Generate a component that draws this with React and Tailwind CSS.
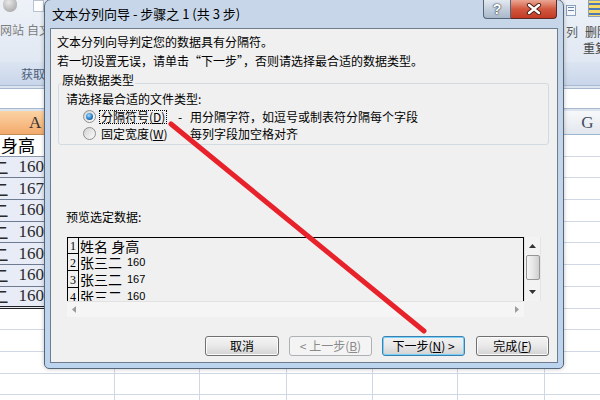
import React from "react";

const cjk = "font-['Noto_Sans_CJK_SC',sans-serif]";
const cols = "grid grid-cols-[115px_85px_87px_86px_85px_87px_86px]";
const dataRows = ["160", "167", "160", "160", "160", "160", "160"];
const previewRows = [
  { n: "1", name: "姓名 身高" },
  { n: "2", name: "张三二", v: "160" },
  { n: "3", name: "张三二", v: "167" },
  { n: "4", name: "张三二", v: "160" },
];

function Radio({ checked }) {
  return (
    <span className="flex h-[13px] w-[13px] shrink-0 items-center justify-center rounded-full border border-[#8e8f8f] bg-linear-to-br from-[#d4d4d4] to-[#fbfbfb]">
      {checked && (
        <span className="h-[7px] w-[7px] rounded-full bg-[radial-gradient(circle_at_40%_35%,#9fe0ff,#2a7cc6_55%,#0d3f7a)]" />
      )}
    </span>
  );
}

function Btn({ children, className }) {
  return (
    <div
      className={`flex h-[20px] items-center justify-center rounded-[3px] border text-[12px] leading-[14px] ${className}`}
    >
      {children}
    </div>
  );
}

function Tri({ dir, color = "#333" }) {
  const pts = {
    up: "0,4 3.5,0 7,4",
    down: "0,0 7,0 3.5,4",
    left: "4,0 4,7 0,3.5",
    right: "0,0 0,7 4,3.5",
  }[dir];
  const vert = dir === "up" || dir === "down";
  return (
    <svg width={vert ? 7 : 4} height={vert ? 4 : 7}>
      <polygon points={pts} fill={color} />
    </svg>
  );
}

function Sheet() {
  const rows = Array.from({ length: 13 }, (_, i) => i);
  return (
    <div className="flex flex-col">
      {/* ribbon */}
      <div className={`flex h-[62px] justify-between bg-linear-to-b from-[#eef2f8] to-[#e0e8f3] text-[12px] leading-[14px] ${cjk}`}>
        <div className="flex w-[44px] shrink-0 overflow-hidden whitespace-nowrap text-[#7d7d7d]">
          <div className="flex w-[27px] shrink-0 flex-col">
            <div className="ml-[3px] -mt-[3px] h-[15px] w-[14px] rounded-full bg-[radial-gradient(circle_at_40%_35%,#e8e8e8,#9a9a9a)]" />
            <span className="mt-[11px]">网站</span>
          </div>
          <div className="flex flex-col">
            <div className="ml-[6px] h-[12px] w-[11px] border border-[#b9c3cf] bg-white" />
            <span className="mt-[11px]">自文本</span>
          </div>
        </div>
        <div className="flex w-[37px] shrink-0 overflow-hidden whitespace-nowrap text-[#444]">
          <div className="flex w-[22px] shrink-0 flex-col items-start">
            <div className="mt-[5px] ml-[3px] flex h-[11px] w-[10px] flex-col gap-[2px] border border-[#8aa0bb] bg-[#f4f8fd] p-[1px]">
              <div className="h-[1px] bg-[#6d86a8]" />
              <div className="h-[1px] bg-[#6d86a8]" />
            </div>
            <span className="mt-[9px] ml-[3px] text-[#5a5a5a]">列</span>
          </div>
          <div className="flex flex-col">
            <div className="ml-[3px] flex h-[17px] w-[14px] flex-col justify-around border border-[#8aa0bb] bg-[#f6d867]">
              <div className="h-[2px] bg-[#4d79b7]" />
              <div className="h-[2px] bg-[#4d79b7]" />
              <div className="h-[2px] bg-[#4d79b7]" />
            </div>
            <span className="mt-[8px]">删除</span>
            <span className="-ml-[2px] mt-[2px]">重复项</span>
          </div>
        </div>
      </div>
      <div className="flex h-[24px] items-center justify-between border-b border-[#a9bad3] bg-linear-to-b from-[#dbe4f1] to-[#c9d6ea]">
        <span className={`pl-[21px] text-[12px] text-[#4b5e7b] ${cjk}`}>获取</span>
      </div>
      <div className="h-[2px] bg-[#dde5f1]" />
      <div className="h-[21px] border-y border-[#a8b8cf] bg-white" />
      <div className="h-[2px] bg-[#dbe3ee]" />
      {/* column headers */}
      <div className={`${cols} h-[24px] font-['Liberation_Serif',serif] text-[17px] leading-[23px] text-[#333]`}>
        <div className="border-r border-b border-[#c58d55] bg-linear-to-b from-[#fbd3a4] to-[#f3aa6c] pl-[29px]">A</div>
        <div className="border-r border-b border-[#9eb6ce] bg-linear-to-b from-[#f7f8fa] to-[#e2e7ee]" />
        <div className="border-r border-b border-[#9eb6ce] bg-linear-to-b from-[#f7f8fa] to-[#e2e7ee]" />
        <div className="border-r border-b border-[#9eb6ce] bg-linear-to-b from-[#f7f8fa] to-[#e2e7ee]" />
        <div className="border-r border-b border-[#9eb6ce] bg-linear-to-b from-[#f7f8fa] to-[#e2e7ee]" />
        <div className="border-r border-b border-[#9eb6ce] bg-linear-to-b from-[#f7f8fa] to-[#e2e7ee]" />
        <div className="border-r border-b border-[#9eb6ce] bg-linear-to-b from-[#f7f8fa] to-[#e2e7ee] text-center text-[#3d4b5e]">G</div>
      </div>
      {rows.map((i) => {
        const isData = i >= 1 && i <= 7;
        let aCls = "border-r border-b border-[#d0d7e5] bg-white";
        if (i === 0) aCls = "border-b border-[#8c98ac] bg-white";
        if (isData) aCls = "border-b border-[#6f7b90] bg-[#e8ecf7]";
        if (i === 7) aCls = "border-b-[3px] border-double border-[#222] bg-[#e8ecf7]";
        return (
          <div key={i} className={`${cols} h-[21.7px]`}>
            <div className={`flex items-center overflow-hidden ${aCls}`}>
              {i === 0 && (
                <div className={`flex w-[35px] justify-end overflow-hidden whitespace-nowrap text-[17px] leading-[20px] text-black ${cjk}`}>
                  姓名 身高
                </div>
              )}
              {isData && (
                <div className="flex w-[44px] items-center justify-end overflow-hidden whitespace-nowrap leading-[20px] text-[#2a2a2a]">
                  <span className={`text-[17px] ${cjk}`}>张三二</span>
                  <span className="ml-[10px] font-['Liberation_Serif',serif] text-[17px]">{dataRows[i - 1]}</span>
                </div>
              )}
            </div>
            <div className="border-r border-b border-[#d0d7e5] bg-white" />
            <div className="border-r border-b border-[#d0d7e5] bg-white" />
            <div className="border-r border-b border-[#d0d7e5] bg-white" />
            <div className="border-r border-b border-[#d0d7e5] bg-white" />
            <div className="border-r border-b border-[#d0d7e5] bg-white" />
            <div className="border-r border-b border-[#d0d7e5] bg-white" />
          </div>
        );
      })}
    </div>
  );
}

function Dialog() {
  return (
    <div className="absolute left-[44px] top-[-1px] flex h-[370px] w-[520px] flex-col rounded-t-[7px] rounded-b-[5px] border border-[#56667a] bg-linear-to-b from-[#c7d6e9] via-[#c3d5ea] to-[#bcd4ee] shadow-[0_0_4px_rgba(0,0,0,0.25)]">
      {/* title bar */}
      <div className="flex h-[28px] shrink-0 items-start justify-between pl-[7px] pr-[6px]">
        <div className={`pt-[5px] text-[13px] leading-[17px] text-black ${cjk}`}>
          文本分列向导 - 步骤之 1 (共 3 步)
        </div>
        <div className="flex h-[19px]">
          <div className="flex w-[28px] items-center justify-center rounded-bl-[4px] border border-t-0 border-[#56667a] bg-linear-to-b from-[#e3e9f1] via-[#c4cfdc] to-[#a9b8ca] font-['Liberation_Sans',sans-serif] text-[14px] font-bold text-white [text-shadow:0_0_2px_#1d2a3a,0_0_1px_#1d2a3a]">
            ?
          </div>
          <div className="flex w-[46px] items-center justify-center rounded-br-[4px] border border-t-0 border-l-0 border-[#5a2a22] bg-linear-to-b from-[#eaa693] via-[#d2583f] to-[#c23a23]">
            <svg width="16" height="12">
              <path d="M3 2 L13 10 M13 2 L3 10" stroke="#4a1e16" strokeWidth="4.2" strokeLinecap="round" />
              <path d="M3 2 L13 10 M13 2 L3 10" stroke="#fff" strokeWidth="2.4" strokeLinecap="round" />
            </svg>
          </div>
        </div>
      </div>

      {/* client area */}
      <div className={`mx-[5px] flex h-[335px] flex-col border border-[#6e7c8d] bg-[#f0f0f0] text-[12px] leading-[14px] text-black ${cjk}`}>
        <div className="mt-[6px] h-[14px] pl-[6px]">文本分列向导判定您的数据具有分隔符。</div>
        <div className="mt-[5px] h-[14px] pl-[6px]">若一切设置无误，请单击“下一步”，否则请选择最合适的数据类型。</div>

        <fieldset className="ml-[7px] mt-[5px] w-[491px] rounded-[3px] border border-[#d2dbe2] pb-[2px] pl-[7px]">
          <legend className="ml-[-5px] px-[1px] pb-[6px] leading-[14px]">原始数据类型</legend>
          <div className="-mt-[1px] h-[14px]">请选择最合适的文件类型:</div>
          <div className="mt-[2px] flex h-[17px] items-center">
            <div className="ml-[17px] flex w-[95px] items-center">
              <Radio checked />
              <span className="ml-[3px] border border-dotted border-black px-[1px] leading-[12px]">
                分隔符号(<span className="underline">D</span>)
              </span>
            </div>
            <span className="inline-block w-[12px]">-</span>
            <span>用分隔字符，如逗号或制表符分隔每个字段</span>
          </div>
          <div className="flex h-[17px] items-center">
            <div className="ml-[17px] flex w-[95px] items-center">
              <Radio />
              <span className="ml-[3px] border border-transparent px-[1px] leading-[12px]">
                固定宽度(<span className="underline">W</span>)
              </span>
            </div>
            <span className="pl-[12px]">每列字段加空格对齐</span>
          </div>
        </fieldset>

        <div className="ml-[15px] mt-[65px] h-[14px]">预览选定数据:</div>

        {/* preview */}
        <div className="ml-[16px] mt-[13px] grid h-[80px] w-[474px] grid-cols-[457px_17px] grid-rows-[64px_16px]">
          <div className="overflow-hidden border-x border-t border-black">
            {previewRows.map((r, i) => (
              <div key={r.n} className={`flex ${i === 0 ? "h-[16px]" : "h-[17px]"}`}>
                <div className="flex w-[11px] items-end justify-center border-r border-b border-black font-['Liberation_Serif',serif] text-[12px] leading-[13px]">
                  {r.n}
                </div>
                <div className="flex items-center pl-[1px] text-[14px] leading-[15px]">
                  <span>{r.name}</span>
                  {r.v && (
                    <span className="ml-[5px] font-['Liberation_Sans',sans-serif] text-[11px]">{r.v}</span>
                  )}
                </div>
              </div>
            ))}
          </div>
          <div className="flex flex-col items-center border-x border-[#e4e4e4] bg-[#f3f3f3]">
            <div className="mt-[7px]">
              <Tri dir="up" />
            </div>
            <div className="mt-[7px] h-[25px] w-[14px] rounded-[2px] border border-[#969696] bg-linear-to-r from-[#f6f6f6] via-[#e6e6e6] to-[#cfcfcf]" />
            <div className="mt-[10px]">
              <Tri dir="down" />
            </div>
          </div>
          <div className="flex items-center justify-between border-t border-[#e2e2e2] bg-[#f5f5f5] px-[5px]">
            <Tri dir="left" color="#9c9c9c" />
            <Tri dir="right" color="#9c9c9c" />
          </div>
          <div className="bg-[#f0f0f0]" />
        </div>

        {/* buttons */}
        <div className="mt-[19px] flex justify-end gap-[10px] pr-[8px]">
          <Btn className="w-[74px] border-[#707070] bg-linear-to-b from-[#f4f4f4] via-[#e9e9e9] to-[#d2d2d2] shadow-[inset_0_0_0_1px_#fbfbfb]">
            取消
          </Btn>
          <Btn className="w-[83px] border-[#adb2b5] bg-[#f4f4f4] text-[#8a8a8a]">
            &lt; 上一步(<span className="underline">B</span>)
          </Btn>
          <Btn className="w-[83px] border-[#3c7fb1] bg-linear-to-b from-[#f2f2f2] via-[#e8e8e8] to-[#d2d2d2] shadow-[inset_0_0_0_1px_#76d2f6]">
            下一步(<span className="underline">N</span>)&nbsp;&gt;
          </Btn>
          <Btn className="ml-[1px] w-[73px] border-[#707070] bg-linear-to-b from-[#f4f4f4] via-[#e9e9e9] to-[#d2d2d2] shadow-[inset_0_0_0_1px_#fbfbfb]">
            完成(<span className="underline">F</span>)
          </Btn>
        </div>
      </div>
    </div>
  );
}

export default function App() {
  return (
    <div className="relative h-[400px] w-[600px] overflow-hidden bg-white">
      <Sheet />
      <Dialog />
      {/* red annotation stroke */}
      <svg className="pointer-events-none absolute left-0 top-0" width="600" height="400">
        <line x1="171" y1="124" x2="424" y2="331" stroke="#e8222a" strokeWidth="5" strokeLinecap="round" />
      </svg>
    </div>
  );
}
